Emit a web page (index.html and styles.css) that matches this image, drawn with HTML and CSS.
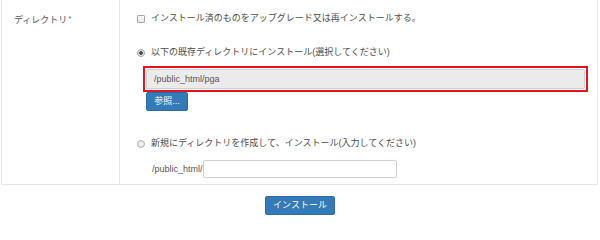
FILE: index.html
```html
<!DOCTYPE html>
<html lang="ja">
<head>
<meta charset="utf-8">
<title>インストール</title>
<link rel="stylesheet" href="styles.css">
</head>
<body>
<div class="form-table">
  <div class="label-cell">ディレクトリ<span class="req">*</span></div>
  <div class="field-cell">
    <label class="opt opt-first"><input type="checkbox" class="chk"><span>インストール済のものをアップグレード又は再インストールする。</span></label>
    <label class="opt opt-radio1"><input type="radio" name="dir" class="rad" checked><span>以下の既存ディレクトリにインストール(選択してください)</span></label>
    <div class="highlight"><input type="text" class="path-input" value="/public_html/pga" readonly></div>
    <button type="button" class="btn btn-browse">参照...</button>
    <label class="opt opt-radio2"><input type="radio" name="dir" class="rad"><span>新規にディレクトリを作成して、インストール(入力してください)</span></label>
    <div class="new-dir"><span class="prefix">/public_html/</span><input type="text" class="new-input"></div>
  </div>
</div>
<div class="actions"><button type="button" class="btn btn-install">インストール</button></div>
</body>
</html>
```
FILE: styles.css
```css
html, body {
  margin: 0;
  padding: 0;
  background: #fff;
}
body {
  font-family: "Liberation Sans", "Noto Sans CJK JP", sans-serif;
  font-size: 9px;
  color: #4d4d4d;
  width: 600px;
  height: 230px;
  overflow: hidden;
}
.form-table {
  display: grid;
  grid-template-columns: 118px 1fr;
  margin: 0 2px 0 1px;
  border-left: 1px solid #e6e6e6;
  border-right: 1px solid #e6e6e6;
  border-bottom: 1px solid #e6e6e6;
  height: 184px;
}
.label-cell {
  border-right: 1px solid #e6e6e6;
  padding: 12px 0 0 12px;
  line-height: 13px;
  color: #555;
}
.req {
  font-size: 7px;
  vertical-align: 2px;
  margin-left: 1px;
}
.field-cell {
  padding-left: 16px;
  display: flex;
  flex-direction: column;
  align-items: flex-start;
}
.opt {
  display: flex;
  align-items: center;
  height: 13px;
  line-height: 13px;
  gap: 6px;
}
.opt-first { margin-top: 12px; }
.opt-radio1 { margin-top: 21px; }
.opt-radio2 { margin-top: 26px; }
.chk, .rad {
  appearance: none;
  -webkit-appearance: none;
  margin: 0 0 0 1px;
  width: 8px;
  height: 8px;
  box-sizing: border-box;
  border: 1px solid #a9a9a9;
  background: linear-gradient(#fdfdfd, #e6e6e6);
  flex: none;
}
.chk { border-radius: 1px; }
.rad {
  border-radius: 50%;
  border-color: #b0b0b0;
  background: radial-gradient(circle, #f4f4f4 0, #dcdcdc 100%);
}
.rad:checked {
  background: radial-gradient(circle, #555 0, #555 1.6px, #eee 2.2px, #eee 100%);
  border-color: #a0a0a0;
}
.highlight {
  margin: 7px 0 0 7px;
  width: 445px;
  box-sizing: border-box;
  border: 2px solid #e3141d;
  padding: 1px;
}
.path-input {
  display: block;
  box-sizing: border-box;
  width: 100%;
  height: 20px;
  margin: 0;
  border: 1px solid #d0d0d0;
  border-radius: 2px;
  background: #ebebeb;
  padding: 0 0 0 7px;
  font: inherit;
  color: #555;
  outline: none;
}
.btn {
  font: inherit;
  color: #fff;
  background: #337ab7;
  border: 1px solid #2e6da4;
  border-radius: 2px;
  box-sizing: border-box;
  margin: 0;
  padding: 0;
  line-height: 17px;
  height: 19px;
  cursor: pointer;
}
.btn-browse {
  margin-left: 10px;
  width: 42px;
}
.new-dir {
  display: flex;
  align-items: center;
  margin: 10px 0 0 16px;
  height: 18px;
}
.prefix {
  width: 51px;
  color: #555;
}
.new-input {
  box-sizing: border-box;
  width: 194px;
  height: 18px;
  margin: 0;
  border: 1px solid #d0d0d0;
  border-radius: 2px;
  background: #fff;
  font: inherit;
  outline: none;
}
.actions {
  display: flex;
  justify-content: center;
  margin-top: 11px;
}
.btn-install {
  width: 70px;
}
```
